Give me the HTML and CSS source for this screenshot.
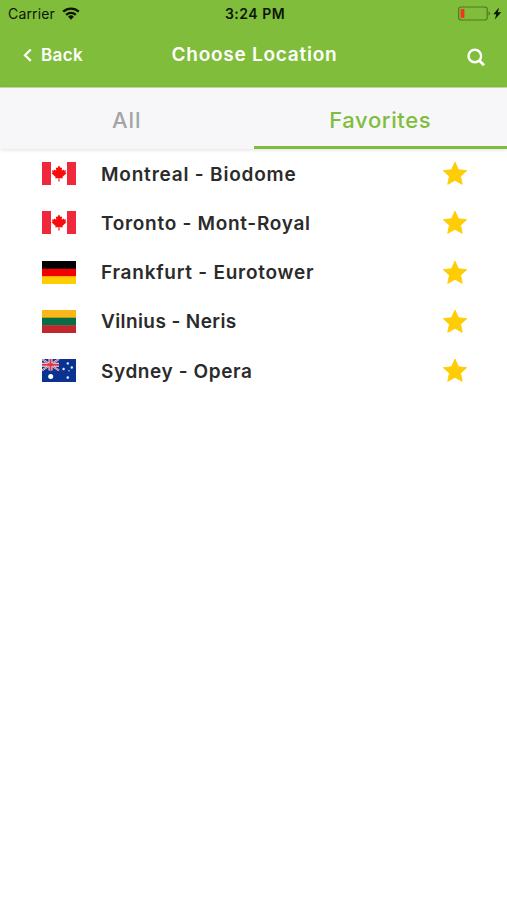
FILE: index.html
```html
<!DOCTYPE html>
<html lang="en">
<head>
  <meta charset="UTF-8" />
  <meta name="viewport" content="width=device-width, initial-scale=1.0"/>
  <title>Choose Location</title>
  <link rel="stylesheet" href="styles.css">
</head>
<body>

  <!-- Shared flag and star shapes -->
  <svg class="symbols" width="0" height="0">
    <symbol id="canada" viewBox="0 0 34 23">
      <rect width="34" height="23" fill="#fff"/>
      <path fill="#f0283c" d="M0 0h9v23H0zM25 0h9v23h-9z"/>
      <path fill="#f80c0c" d="M17 3.4l1.7 2.6 1.5-.6-.5 3.4 1.9-1.4.5 1.1 2-.1-.7 2.1 1 .8-4 3.8.3 1.5-3.2-.5.1 3.3h-1.2l.1-3.3-3.2.5.3-1.5-4-3.8 1-.8-.7-2.1 2 .1.5-1.1 1.9 1.4-.5-3.4 1.5.6z"/>
    </symbol>
    <symbol id="germany" viewBox="0 0 34 23">
      <rect width="34" height="8" fill="#000"/>
      <rect y="7.7" width="34" height="8" fill="#f50000"/>
      <rect y="15.3" width="34" height="7.7" fill="#ffce00"/>
    </symbol>
    <symbol id="lithuania" viewBox="0 0 34 23">
      <rect width="34" height="8" fill="#fbb618"/>
      <rect y="7.7" width="34" height="8" fill="#086c45"/>
      <rect y="15.3" width="34" height="7.7" fill="#c1272d"/>
    </symbol>
    <symbol id="australia" viewBox="0 0 34 23">
      <rect width="34" height="23" fill="#0a3391"/>
      <path stroke="#e8e4f0" stroke-width="2" d="M0 0l17 11.5M17 0L0 11.5"/>
      <path stroke="#e8e4f0" stroke-width="4" d="M8.5 0v11.5M0 5.7h17"/>
      <path stroke="#dc3545" stroke-width=".8" d="M0 0l17 11.5M17 0L0 11.5"/>
      <path stroke="#dc3545" stroke-width="2" d="M8.5 0v11.5M0 5.7h17"/>
      <circle cx="8.7" cy="17.4" r="2.5" fill="#fff"/>
      <g fill="#dfe9ff">
        <circle cx="25.8" cy="4.4" r="1.2"/>
        <circle cx="21.6" cy="10" r="1.2"/>
        <circle cx="29.8" cy="8.5" r="1.2"/>
        <circle cx="27" cy="11.8" r=".7"/>
        <circle cx="25.8" cy="18.6" r="1.3"/>
      </g>
    </symbol>
    <symbol id="star" viewBox="0 0 26 25">
      <path fill="#ffcd05" stroke="#ffcd05" stroke-linejoin="round" d="M13 1.2l3.4 7.6 8.2.9-6.1 5.5 1.7 8.1-7.2-4.1-7.2 4.1 1.7-8.1-6.1-5.5 8.2-.9z"/>
    </symbol>
  </svg>

  <header class="header">
    <div class="status-bar">
      <div class="carrier">
        <span>Carrier</span>
        <svg width="18" height="14" viewBox="0 0 18 14">
          <g fill="none" stroke="#0c1606" stroke-width="2.3">
            <path d="M1.2 4.7a11.2 11.2 0 0 1 15.6 0"/>
            <path d="M4.2 7.8a6.9 6.9 0 0 1 9.6 0"/>
          </g>
          <path fill="#0c1606" d="M9 12.7l-2.9-3a4.1 4.1 0 0 1 5.8 0z"/>
        </svg>
      </div>
      <div class="time">3:24 PM</div>
      <div class="battery">
        <svg width="44" height="16" viewBox="0 0 44 16">
          <rect x=".6" y="1" width="28.6" height="13" rx="2.5" fill="none" stroke="#4e7a25" stroke-width="1.2"/>
          <rect x="2.6" y="3" width="3.8" height="9" rx=".6" fill="#f5361f"/>
          <path d="M30.5 5.5q1.6.3 1.6 2t-1.6 2z" fill="#4e7a25"/>
          <path d="M41 1.5l-5.7 6.8h3L36.8 13.5l6.5-7.2h-3.4z" fill="#0c1606"/>
        </svg>
      </div>
    </div>

    <nav class="navbar">
      <a class="back" href="#">
        <svg width="9" height="14" viewBox="0 0 9 14">
          <path d="M7.8 1.5L2 7.2l5.8 5.7" fill="none" stroke="#fff" stroke-width="2.3"/>
        </svg>
        <span>Back</span>
      </a>
      <h1>Choose Location</h1>
      <a class="search" href="#">
        <svg width="20" height="20" viewBox="0 0 20 20">
          <circle cx="8.8" cy="8" r="6.3" fill="none" stroke="#fff" stroke-width="2.4"/>
          <path d="M13 12.2l5 5" stroke="#fff" stroke-width="2.8"/>
        </svg>
      </a>
    </nav>
  </header>

  <div class="tabs">
    <a class="tab all" href="#">All</a>
    <a class="tab active" href="#">Favorites</a>
  </div>

  <ul class="locations">
    <li>
      <svg class="flag"><use href="#canada"/></svg>
      <span class="name montreal">Montreal - Biodome</span>
      <svg class="star"><use href="#star"/></svg>
    </li>
    <li>
      <svg class="flag"><use href="#canada"/></svg>
      <span class="name toronto">Toronto - Mont-Royal</span>
      <svg class="star"><use href="#star"/></svg>
    </li>
    <li>
      <svg class="flag"><use href="#germany"/></svg>
      <span class="name frankfurt">Frankfurt - Eurotower</span>
      <svg class="star"><use href="#star"/></svg>
    </li>
    <li>
      <svg class="flag"><use href="#lithuania"/></svg>
      <span class="name vilnius">Vilnius - Neris</span>
      <svg class="star"><use href="#star"/></svg>
    </li>
    <li>
      <svg class="flag"><use href="#australia"/></svg>
      <span class="name sydney">Sydney - Opera</span>
      <svg class="star"><use href="#star"/></svg>
    </li>
  </ul>

</body>
</html>
```
FILE: styles.css
```css
* {
  box-sizing: border-box;
}

body {
  margin: 0;
  background: #fff;
  font-family: Inter, "Open Sans", sans-serif;
}

svg {
  display: block;
}

a {
  text-decoration: none;
}

.symbols {
  position: absolute;
}

/* Header */
.header {
  height: 88px;
  background: #80bd3b;
  border-bottom: 1px solid #c4dfa5;
}

.status-bar {
  display: grid;
  grid-template-columns: 1fr auto 1fr;
  align-items: center;
  height: 27px;
  padding: 0 5px 0 8px;
  color: #0c1606;
  font-size: 14px;
}

.carrier {
  display: flex;
  align-items: center;
  gap: 7px;
  letter-spacing: 0.15px;
}

.time {
  font-weight: 600;
  letter-spacing: 0.5px;
}

.battery {
  display: flex;
  justify-content: flex-end;
}

.navbar {
  display: grid;
  grid-template-columns: 1fr auto 1fr;
  align-items: center;
  height: 56px;
  padding: 0 21px 0 23px;
}

.navbar h1 {
  margin: 0;
  padding-bottom: 2px;
  color: #fff;
  font-size: 19px;
  font-weight: 600;
  letter-spacing: 0.75px;
}

.back {
  display: flex;
  align-items: center;
  gap: 9px;
  color: #fff;
  font-size: 17px;
  font-weight: 600;
  letter-spacing: 0.4px;
}

.search {
  justify-self: end;
  padding-top: 5px;
}

/* Tabs */
.tabs {
  display: grid;
  grid-template-columns: 1fr 1fr;
  height: 61px;
  background: #f7f7f9;
  box-shadow: 0 1px 4px rgba(0, 0, 0, 0.12);
}

.tab {
  display: flex;
  align-items: center;
  justify-content: center;
  padding-top: 6px;
  border-bottom: 3px solid transparent;
  color: #a3a5a7;
  font-size: 22px;
  font-weight: 500;
  letter-spacing: 0.6px;
}

.tab.all {
  letter-spacing: 1px;
}

.tab.active {
  border-color: #80bd3b;
  color: #80bd3b;
}

/* Locations */
.locations {
  margin: 0;
  padding: 0;
  list-style: none;
}

.locations li {
  display: flex;
  align-items: center;
  height: 49.25px;
  padding: 0 39px 0 42px;
}

.flag {
  width: 34px;
  height: 23px;
}

.name {
  flex: 1;
  margin-left: 25px;
  padding-top: 1px;
  color: #2b2b2b;
  font-size: 19px;
  font-weight: 600;
  letter-spacing: 0.7px;
}

.name.montreal {
  letter-spacing: 0.8px;
}

.name.frankfurt {
  letter-spacing: 0.75px;
}

.name.vilnius {
  letter-spacing: 0.4px;
}

.name.sydney {
  letter-spacing: 0.6px;
}

.star {
  width: 26px;
  height: 25px;
}
```
